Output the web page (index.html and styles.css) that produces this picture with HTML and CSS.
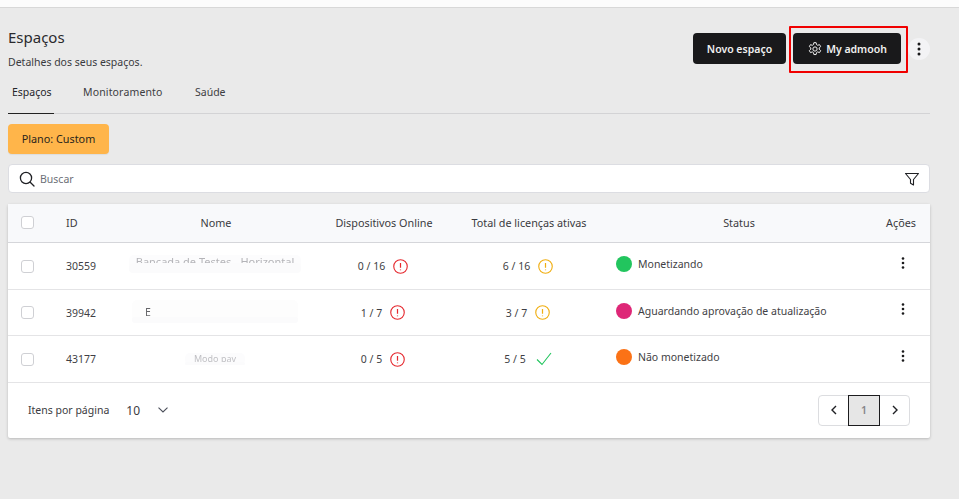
FILE: index.html
```html
<!DOCTYPE html>
<html lang="pt-BR">
<head>
    <meta charset="UTF-8">
    <meta name="viewport" content="width=device-width, initial-scale=1.0">
    <title>Espaços</title>
    <link rel="stylesheet" href="styles.css">
</head>
<body>
    <div class="topbar"></div>

    <div class="page">
        <div class="page-head">
            <div>
                <h1>Espaços</h1>
                <p>Detalhes dos seus espaços.</p>
            </div>
            <div class="head-actions">
                <button class="btn-dark">Novo espaço</button>
                <div class="highlight">
                    <button class="btn-dark btn-admin">
                        <svg width="16" height="16" viewBox="0 0 24 24" fill="none" stroke="currentColor" stroke-width="1.5" stroke-linejoin="round"><path d="M10.3 2.500h3.400l.6 2.900 1.700 1 2.800-.9 1.700 2.900-2.200 2v2l2.200 2-1.700 3-2.800-1-1.700 1-.6 2.900h-3.400l-.6-2.900-1.700-1-2.800 1-1.700-3 2.200-2v-2l-2.200-2 1.700-2.900 2.800.9 1.700-1z"/><circle cx="12" cy="12" r="3.200"/></svg>
                        My admooh
                    </button>
                </div>
                <button class="btn-more">
                    <svg width="4" height="14" viewBox="0 0 4 14" fill="#1a1a1c"><circle cx="2" cy="2" r="1.500"/><circle cx="2" cy="7" r="1.500"/><circle cx="2" cy="12" r="1.500"/></svg>
                </button>
            </div>
        </div>

        <div class="tabs">
            <a class="tab active">Espaços</a>
            <a class="tab tab-mid">Monitoramento</a>
            <a class="tab">Saúde</a>
        </div>

        <div class="plan">Plano: Custom</div>

        <div class="search">
            <svg width="16" height="16" viewBox="0 0 16 16" fill="none" stroke="#1f2024" stroke-width="1.300" stroke-linecap="round"><circle cx="7" cy="7" r="5.600"/><path d="M11.200 11.200l3.800 3.800"/></svg>
            <span>Buscar</span>
            <svg class="filter" width="16" height="16" viewBox="0 0 16 16" fill="none" stroke="#1f2024" stroke-width="1.100" stroke-linejoin="round"><path d="M1.500 2.500h13l-5 6v5.500l-3-1.800V8.500z"/></svg>
        </div>

        <div class="card">
            <table>
                <colgroup>
                    <col class="c-check"><col class="c-id"><col class="c-name"><col class="c-online"><col class="c-lic"><col class="c-status"><col class="c-act">
                </colgroup>
                <thead>
                    <tr>
                        <th><span class="check"></span></th>
                        <th class="left">ID</th>
                        <th class="name-head">Nome</th>
                        <th>Dispositivos Online</th>
                        <th>Total de licenças ativas</th>
                        <th>Status</th>
                        <th class="act-head">Ações</th>
                    </tr>
                </thead>
                <tbody>
                    <tr>
                        <td><span class="check"></span></td>
                        <td class="left">30559</td>
                        <td><span class="blurred b1">Bancada de Testes - Horizontal</span></td>
                        <td><span class="count">0 / 16<svg class="alert red" viewBox="0 0 16 16"><circle cx="8" cy="8" r="7.200"/><path d="M8 4.200v5M8 11.200v.8"/></svg></span></td>
                        <td><span class="count">6 / 16<svg class="alert amber" viewBox="0 0 16 16"><circle cx="8" cy="8" r="7.200"/><path d="M8 4.200v5M8 11.200v.8"/></svg></span></td>
                        <td class="left status-cell"><span class="status"><i class="dot green"></i>Monetizando</span></td>
                        <td class="actions"><svg width="4" height="12" viewBox="0 0 4 12" fill="#1a1a1c"><circle cx="2" cy="1.500" r="1.300"/><circle cx="2" cy="6" r="1.300"/><circle cx="2" cy="10.500" r="1.300"/></svg></td>
                    </tr>
                    <tr>
                        <td><span class="check"></span></td>
                        <td class="left">39942</td>
                        <td><span class="blurred b2">E</span></td>
                        <td><span class="count">1 / 7<svg class="alert red" viewBox="0 0 16 16"><circle cx="8" cy="8" r="7.200"/><path d="M8 4.200v5M8 11.200v.8"/></svg></span></td>
                        <td><span class="count">3 / 7<svg class="alert amber" viewBox="0 0 16 16"><circle cx="8" cy="8" r="7.200"/><path d="M8 4.200v5M8 11.200v.8"/></svg></span></td>
                        <td class="left status-cell"><span class="status"><i class="dot pink"></i>Aguardando aprovação de atualização</span></td>
                        <td class="actions"><svg width="4" height="12" viewBox="0 0 4 12" fill="#1a1a1c"><circle cx="2" cy="1.500" r="1.300"/><circle cx="2" cy="6" r="1.300"/><circle cx="2" cy="10.500" r="1.300"/></svg></td>
                    </tr>
                    <tr>
                        <td><span class="check"></span></td>
                        <td class="left">43177</td>
                        <td><span class="blurred b3">Modo pav</span></td>
                        <td><span class="count">0 / 5<svg class="alert red" viewBox="0 0 16 16"><circle cx="8" cy="8" r="7.200"/><path d="M8 4.200v5M8 11.200v.8"/></svg></span></td>
                        <td><span class="count">5 / 5<svg class="tick" viewBox="0 0 16 14"><path d="M1 7.500l5 5L15 1"/></svg></span></td>
                        <td class="left status-cell"><span class="status"><i class="dot orange"></i>Não monetizado</span></td>
                        <td class="actions"><svg width="4" height="12" viewBox="0 0 4 12" fill="#1a1a1c"><circle cx="2" cy="1.500" r="1.300"/><circle cx="2" cy="6" r="1.300"/><circle cx="2" cy="10.500" r="1.300"/></svg></td>
                    </tr>
                </tbody>
            </table>

            <div class="card-foot">
                <div class="per-page">
                    <span>Itens por página</span>
                    <b>10</b>
                    <svg width="10" height="6" viewBox="0 0 10 6" fill="none" stroke="#4b4f5a" stroke-width="1.100"><path d="M.5.700L5 5l4.500-4.300"/></svg>
                </div>
                <div class="pager">
                    <button><svg width="6" height="10" viewBox="0 0 6 10" fill="none" stroke="#1f2024" stroke-width="1.400"><path d="M5 1L1 5l4 4"/></svg></button>
                    <button class="current">1</button>
                    <button><svg width="6" height="10" viewBox="0 0 6 10" fill="none" stroke="#1f2024" stroke-width="1.400"><path d="M1 1l4 4-4 4"/></svg></button>
                </div>
            </div>
        </div>
    </div>
</body>
</html>
```

FILE: styles.css
```css
* {
    margin: 0;
    padding: 0;
    box-sizing: border-box;
}
body {
    font-family: "Noto Sans", Arial, sans-serif;
    background-color: #eaeaea;
    color: #2c2c30;
    height: 499px;
    overflow: hidden;
}
.topbar {
    height: 8px;
    background-color: #fcfcfc;
    border-bottom: 1px solid #d8d8d8;
}
.page {
    width: 930px;
    padding-left: 8px;
}
.page-head {
    display: flex;
    justify-content: space-between;
    align-items: flex-start;
    padding-top: 19px;
    height: 73px;
}
.page-head h1 {
    font-size: 15px;
    line-height: 20px;
    font-weight: 400;
    color: #2a2a2e;
}
.page-head p {
    font-size: 10.5px;
    line-height: 14px;
    margin-top: 8px;
    color: #3a3a40;
}
.head-actions {
    display: flex;
    align-items: center;
    margin-top: 6px;
}
.btn-dark {
    height: 31px;
    width: 93px;
    background-color: #19191b;
    color: #f0f0f0;
    border: none;
    border-radius: 4px;
    font-family: inherit;
    font-size: 10.5px;
    font-weight: 600;
    display: flex;
    align-items: center;
    justify-content: center;
    gap: 3px;
}
.highlight {
    margin: -7px 0 -9px 3px;
    padding: 5px 5px 0 2px;
    border: 2px solid #f00000;
    border-radius: 1px;
    height: 47px;
    width: 119px;
}
.btn-admin {
    width: 108px;
}
.btn-more {
    width: 22px;
    height: 22px;
    border: none;
    border-radius: 50%;
    background-color: #f3f3f5;
    display: flex;
    align-items: center;
    justify-content: center;
}
.tabs {
    display: flex;
    gap: 29px;
    height: 33px;
    border-bottom: 1px solid #d3d3d5;
}
.tab {
    font-size: 10.5px;
    line-height: 14px;
    padding-top: 4px;
    color: #3d3d42;
    height: 33px;
    white-space: nowrap;
}
.tab.active {
    color: #25252a;
    width: 46px;
    border-bottom: 1px solid #222;
    padding-left: 4px;
}
.tab-mid {
    width: 83px;
    letter-spacing: 0.15px;
}
.plan {
    width: 101px;
    height: 30px;
    margin-top: 10px;
    background-color: #ffb54a;
    border-radius: 4px;
    color: #29251c;
    font-size: 10.8px;
    line-height: 30px;
    text-align: center;
    box-shadow: 0 1px 1px rgba(0,0,0,0.06);
}
.search {
    height: 29px;
    margin-top: 10px;
    background-color: #fff;
    border: 1px solid #dcdde2;
    border-radius: 4px;
    display: flex;
    align-items: center;
    padding: 0 9px 0 10px;
    font-size: 10.5px;
    color: #6d7078;
}
.search span {
    margin-left: 5px;
}
.search .filter {
    margin-left: auto;
}
.card {
    margin-top: 11px;
    background-color: #fff;
    box-shadow: 0 1px 3px rgba(0,0,0,0.22);
    border-radius: 2px;
}
table {
    width: 100%;
    table-layout: fixed;
    border-collapse: collapse;
}
.c-check { width: 46px; }
.c-id { width: 66px; }
.c-name { width: 190px; }
.c-online { width: 148px; }
.c-lic { width: 142px; }
.c-status { width: 278px; }
.c-act { width: 52px; }
th {
    height: 38px;
    background-color: #f8f9fb;
    border-bottom: 1px solid #d5d6da;
    font-size: 10.8px;
    font-weight: 400;
    color: #3b3b41;
    text-align: center;
}
td {
    height: 46px;
    padding-top: 1px;
    border-bottom: 1px solid #e4e4e6;
    font-size: 10.5px;
    color: #3f3f45;
    text-align: center;
}
tbody tr:nth-child(odd) td {
    height: 47px;
}
.left {
    text-align: left;
    padding-left: 12px;
}
.name-head {
    padding-left: 2px;
}
.act-head {
    padding-right: 6px;
}
.check {
    display: block;
    width: 13px;
    height: 13px;
    margin-left: 13px;
    border: 1px solid #cfd0d4;
    border-radius: 3px;
    background-color: #fff;
}
/* nomes borrados na captura */
.blurred {
    display: inline-block;
    position: relative;
    vertical-align: middle;
    border-radius: 5px;
    color: #b4b4b8;
    filter: blur(0.6px);
    white-space: nowrap;
    text-align: center;
}
.blurred::after {
    content: "";
    position: absolute;
    left: 0;
    right: 0;
    bottom: 0;
    background-color: #fbfbfc;
    border-radius: 4px;
}
.b1 {
    width: 172px;
    height: 18px;
    font-size: 11px;
    line-height: 13px;
    margin-bottom: 4px;
    background-color: #fcfcfd;
}
.b1::after { height: 10px; }
.b2 {
    width: 166px;
    height: 23px;
    font-size: 10.5px;
    line-height: 24px;
    padding-left: 13px;
    text-align: left;
    margin-top: -3px;
    color: #66666a;
    background-color: #fdfdfd;
}
.b2::after { height: 6px; }
.b3 {
    width: 60px;
    height: 12px;
    font-size: 9px;
    line-height: 12px;
    margin-bottom: 2px;
    color: #c0c0c4;
    background-color: #fcfcfd;
}
.b3::after { height: 3px; }
.count {
    display: inline-flex;
    align-items: center;
    gap: 8px;
    margin-right: 2px;
}
.alert {
    width: 15px;
    height: 15px;
    fill: none;
    stroke-width: 1.200;
}
.alert path {
    stroke-width: 1.300;
}
.alert.red { stroke: #e5282e; }
.alert.amber { stroke: #f0ae11; }
.tick {
    width: 16px;
    height: 14px;
    margin-left: 2px;
    fill: none;
    stroke: #22c55e;
    stroke-width: 1.100;
}
.status-cell {
    padding-left: 16px;
    padding-bottom: 3px;
    padding-top: 0;
}
.status {
    display: flex;
    align-items: center;
    gap: 6px;
}
.dot {
    width: 16px;
    height: 16px;
    border-radius: 50%;
}
.dot.green { background-color: #22c55e; }
.dot.pink { background-color: #de2777; }
.dot.orange { background-color: #fb7216; }
.actions {
    padding-top: 0;
    padding-bottom: 3px;
    padding-right: 2px;
}
.card-foot {
    height: 55px;
    display: flex;
    justify-content: space-between;
    align-items: center;
    padding: 0 20px;
}
.per-page {
    display: flex;
    align-items: center;
    font-size: 10.5px;
    color: #3b3b41;
}
.per-page b {
    font-size: 12px;
    font-weight: 400;
    margin: 0 18px 0 17px;
}
.pager {
    display: flex;
    height: 31px;
    border: 1px solid #dcdde0;
    border-radius: 4px;
}
.pager button {
    width: 29px;
    height: 31px;
    margin-top: -1px;
    border: none;
    background: none;
    display: flex;
    align-items: center;
    justify-content: center;
    font-family: inherit;
}
.pager .current {
    width: 32px;
    background-color: #e6e6e6;
    border: 1px solid #1c1c1e;
    color: #85858a;
    font-size: 10.5px;
    font-weight: 600;
}
```
